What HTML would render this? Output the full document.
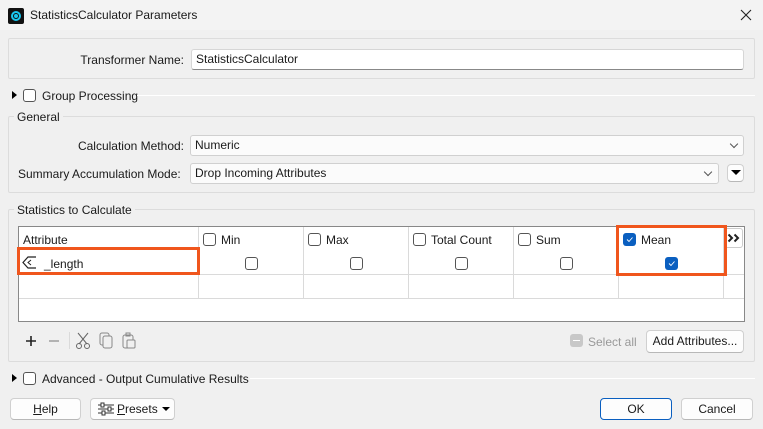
<!DOCTYPE html>
<html><head><style>
*{box-sizing:border-box;margin:0;padding:0}
body{width:763px;height:429px;background:#f0f0f0;font-family:"Liberation Sans",sans-serif;font-size:12px;color:#1a1a1a;position:relative;overflow:hidden}
.a{position:absolute}
.box{position:absolute;border:1px solid #dcdcdc;border-radius:2px}
.inp{position:absolute;background:#fff;border:1px solid #d6d6d6;border-bottom:1px solid #888;border-radius:3px;padding-left:4px;line-height:18px}
.cmb{position:absolute;background:#fbfbfb;border:1px solid #d0d0d0;border-radius:3px;padding-left:4px;line-height:18px}
.cb{position:absolute;width:13px;height:13px;border:1px solid #555;border-radius:3px;background:#fff}
.cbc{position:absolute;width:13px;height:13px;border-radius:3px;background:#0a5fc0}
.btn{position:absolute;background:#fdfdfd;border:1px solid #d0d0d0;border-bottom-color:#b8b8b8;border-radius:4px;text-align:center;line-height:20px}
.vl{position:absolute;width:1px;background:#dadada}
.hl{position:absolute;height:1px;background:#dadada}
.chev{position:absolute;width:6px;height:6px;border-right:1px solid #555;border-bottom:1px solid #555;transform:rotate(45deg)}
.tri{position:absolute;width:0;height:0;border-top:4px solid transparent;border-bottom:4px solid transparent;border-left:5px solid #000}
</style></head><body>
<div class="a" style="left:0;top:0;width:763px;height:30px;background:#f3f3f3"></div>
<div class="a" style="left:8px;top:8px;width:16px;height:16px;background:#111;border-radius:2px"></div>
<div class="a" style="left:11px;top:11px;width:10px;height:10px;border:2px solid #1ac8f0;border-radius:50%"></div>
<div class="a" style="left:14px;top:14px;width:4px;height:4px;background:#1ac8f0;border-radius:50%"></div>
<div class="a" style="left:30px;top:8px">StatisticsCalculator Parameters</div>
<svg class="a" style="left:740px;top:9px" width="12" height="12"><path d="M1 1L11 11M11 1L1 11" stroke="#222" stroke-width="1.1"/></svg>

<div class="box" style="left:8px;top:38px;width:747px;height:41px"></div>
<div class="a" style="left:0;width:184px;top:53px;text-align:right">Transformer Name:</div>
<div class="inp" style="left:191px;top:49px;width:553px;height:21px">StatisticsCalculator</div>

<div class="tri" style="left:12px;top:91px"></div>
<div class="cb" style="left:23px;top:89px"></div>
<div class="a" style="left:42px;top:89px">Group Processing</div>
<div class="hl" style="left:137px;top:95px;width:618px;background:#fff"></div>

<div class="box" style="left:8px;top:116px;width:747px;height:77px"></div>
<div class="a" style="left:14px;top:110px;background:#f0f0f0;padding:0 3px">General</div>
<div class="a" style="left:0;width:184px;top:139px;text-align:right">Calculation Method:</div>
<div class="cmb" style="left:190px;top:135px;width:554px;height:21px">Numeric</div>
<div class="chev" style="left:731px;top:141px"></div>
<div class="a" style="left:18px;top:167px">Summary Accumulation Mode:</div>
<div class="cmb" style="left:190px;top:163px;width:529px;height:21px">Drop Incoming Attributes</div>
<div class="chev" style="left:705px;top:169px"></div>
<div class="btn" style="left:727px;top:164px;width:17px;height:18px"></div>
<div class="a" style="left:731px;top:170px;border-left:5px solid transparent;border-right:5px solid transparent;border-top:5px solid #000"></div>

<div class="box" style="left:8px;top:209px;width:747px;height:153px"></div>
<div class="a" style="left:14px;top:203px;background:#f0f0f0;padding:0 3px">Statistics to Calculate</div>

<div class="a" style="left:18px;top:226px;width:727px;height:96px;background:#fff;border:1px solid #888"></div>
<div class="vl" style="left:198px;top:227px;height:71px"></div>
<div class="vl" style="left:303px;top:227px;height:71px"></div>
<div class="vl" style="left:408px;top:227px;height:71px"></div>
<div class="vl" style="left:513px;top:227px;height:71px"></div>
<div class="vl" style="left:618px;top:227px;height:71px"></div>
<div class="vl" style="left:723px;top:227px;height:71px"></div>
<div class="hl" style="left:19px;top:274px;width:725px"></div>
<div class="hl" style="left:19px;top:298px;width:725px"></div>
<div class="a" style="left:23px;top:233px">Attribute</div>
<div class="cb" style="left:203px;top:233px"></div><div class="a" style="left:221px;top:233px">Min</div>
<div class="cb" style="left:308px;top:233px"></div><div class="a" style="left:326px;top:233px">Max</div>
<div class="cb" style="left:413px;top:233px"></div><div class="a" style="left:431px;top:233px">Total Count</div>
<div class="cb" style="left:518px;top:233px"></div><div class="a" style="left:536px;top:233px">Sum</div>
<div class="cbc" style="left:623px;top:233px"></div><svg class="a" style="left:623px;top:233px" width="13" height="13"><path d="M4 6.5L6 8.5 9.5 4.5" fill="none" stroke="#fff" stroke-width="0.9"/></svg><div class="a" style="left:641px;top:233px">Mean</div>
<div class="cb" style="left:245px;top:257px"></div>
<div class="cb" style="left:350px;top:257px"></div>
<div class="cb" style="left:455px;top:257px"></div>
<div class="cb" style="left:560px;top:257px"></div>
<div class="cbc" style="left:665px;top:257px"></div><svg class="a" style="left:665px;top:257px" width="13" height="13"><path d="M4 6.5L6 8.5 9.5 4.5" fill="none" stroke="#fff" stroke-width="0.9"/></svg>
<div class="a" style="left:724px;top:228px;width:19px;height:20px;border:1px solid #ccc;border-radius:3px;background:#fff"></div>
<svg class="a" style="left:727px;top:233px" width="14" height="10"><path d="M1.5 1.5L5 5 1.5 8.5M7.5 1.5L11 5 7.5 8.5" fill="none" stroke="#222" stroke-width="2"/></svg>
<svg class="a" style="left:22px;top:256px" width="16" height="13"><path d="M14 1H6L1 6.5 6 12H14" fill="none" stroke="#222" stroke-width="1.2"/><path d="M9 4L6 6.5 9 9" fill="none" stroke="#222"/></svg>
<div class="a" style="left:44px;top:257px">_length</div>
<div class="a" style="left:17px;top:247px;width:183px;height:28px;border:3px solid #f0561d"></div>
<div class="a" style="left:616px;top:225px;width:111px;height:51px;border:3px solid #f0561d"></div>

<svg class="a" style="left:25px;top:335px" width="12" height="12"><path d="M6 1V11M1 6H11" stroke="#222" stroke-width="1.6"/></svg>
<svg class="a" style="left:48px;top:335px" width="12" height="12"><path d="M1 6H11" stroke="#999" stroke-width="1.4"/></svg>
<div class="vl" style="left:69px;top:332px;height:17px"></div>
<svg class="a" style="left:75px;top:332px" width="16" height="18"><path d="M3 1L12 12M13 1L4 12" stroke="#666" fill="none"/><circle cx="4" cy="14" r="2.5" fill="none" stroke="#666"/><circle cx="12" cy="14" r="2.5" fill="none" stroke="#666"/></svg>
<svg class="a" style="left:99px;top:332px" width="16" height="18"><rect x="1" y="1" width="9" height="12" rx="2" fill="none" stroke="#888"/><rect x="4" y="4" width="9" height="12" rx="2" fill="#f0f0f0" stroke="#888"/></svg>
<svg class="a" style="left:121px;top:332px" width="16" height="18"><rect x="2" y="3" width="10" height="13" rx="2" fill="none" stroke="#888"/><rect x="5" y="1" width="4" height="3" fill="none" stroke="#888"/><rect x="6" y="8" width="8" height="8" rx="1" fill="#f0f0f0" stroke="#888"/></svg>

<div class="a" style="left:570px;top:334px;width:13px;height:13px;background:#c8c8c8;border-radius:3px"></div>
<div class="a" style="left:573px;top:340px;width:7px;height:1px;background:#fff"></div>
<div class="a" style="left:588px;top:335px;color:#999">Select all</div>
<div class="btn" style="left:646px;top:330px;width:98px;height:23px">Add Attributes...</div>

<div class="tri" style="left:12px;top:374px"></div>
<div class="cb" style="left:23px;top:372px"></div>
<div class="a" style="left:42px;top:372px">Advanced - Output Cumulative Results</div>
<div class="hl" style="left:250px;top:378px;width:505px;background:#fff"></div>

<div class="btn" style="left:10px;top:398px;width:71px;height:22px"><u>H</u>elp</div>
<div class="btn" style="left:90px;top:398px;width:85px;height:22px;text-align:left;padding-left:26px"><u>P</u>resets</div>
<svg class="a" style="left:97px;top:402px" width="18" height="14"><path d="M1 3H17M1 7H17M1 11H17" stroke="#333"/><rect x="4" y="1" width="3" height="4" fill="#fff" stroke="#333"/><rect x="11" y="5" width="3" height="4" fill="#fff" stroke="#333"/><rect x="5" y="9" width="3" height="4" fill="#fff" stroke="#333"/></svg>
<div class="a" style="left:162px;top:407px;border-left:4px solid transparent;border-right:4px solid transparent;border-top:4px solid #000"></div>
<div class="btn" style="left:600px;top:398px;width:72px;height:22px;border:1px solid #0a5fc0">OK</div>
<div class="btn" style="left:681px;top:398px;width:72px;height:22px">Cancel</div>
</body></html>
